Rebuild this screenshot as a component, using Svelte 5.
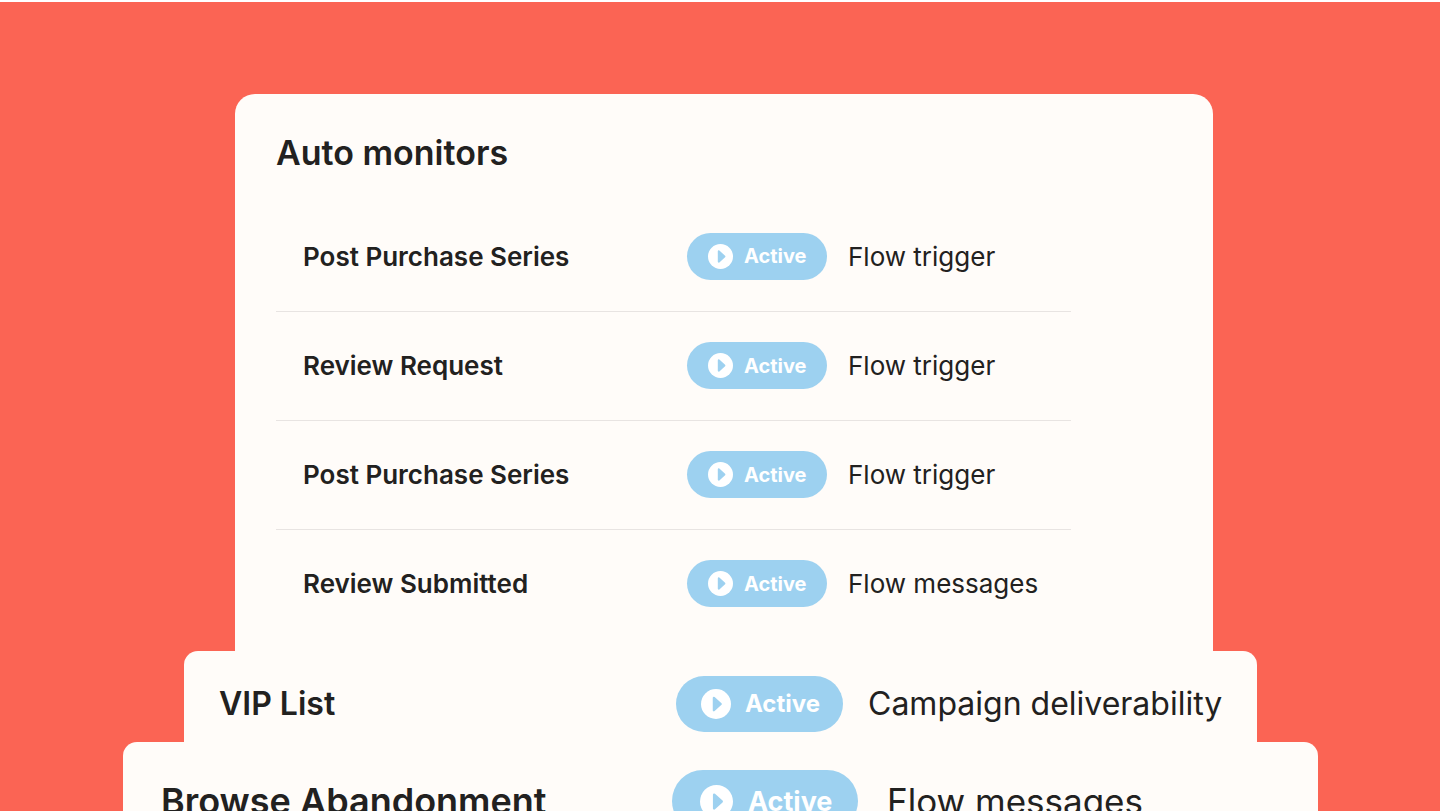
<script lang="ts">
	type Monitor = { name: string; status: string; type: string };

	const monitors: Monitor[] = [
		{ name: 'Post Purchase Series', status: 'Active', type: 'Flow trigger' },
		{ name: 'Review Request', status: 'Active', type: 'Flow trigger' },
		{ name: 'Post Purchase Series', status: 'Active', type: 'Flow trigger' },
		{ name: 'Review Submitted', status: 'Active', type: 'Flow messages' }
	];

	const vip: Monitor[] = [{ name: 'VIP List', status: 'Active', type: 'Campaign deliverability' }];
	const browse: Monitor[] = [{ name: 'Browse Abandonment', status: 'Active', type: 'Flow messages' }];
</script>

{#snippet table(rows: Monitor[], label: string)}
	<table aria-label={label}>
		<tbody>
			{#each rows as row}
				<tr>
					<th scope="row">{row.name}</th>
					<td class="status">
						<span class="badge">
							<svg viewBox="0 0 24 24" aria-hidden="true">
								<circle cx="12" cy="12" r="12" fill="#fff" />
								<path
									d="M10.3 7 L15.8 12 L10.3 17 Z"
									fill="#9dd1f0"
									stroke="#9dd1f0"
									stroke-width="1.8"
									stroke-linejoin="round"
								/>
							</svg>
							{row.status}
						</span>
					</td>
					<td class="type">{row.type}</td>
				</tr>
			{/each}
		</tbody>
	</table>
{/snippet}

<main>
	<section class="card monitors">
		<h1>Auto monitors</h1>
		{@render table(monitors, 'Auto monitors')}
	</section>
	<section class="card vip">
		{@render table(vip, 'VIP List')}
	</section>
	<section class="card browse">
		{@render table(browse, 'Browse Abandonment')}
	</section>
</main>

<style>
	main {
		box-sizing: border-box;
		height: 100vh;
		overflow: hidden;
		padding-top: 92px;
		border-top: 2px solid #fff;
		background: #fb6454;
		color: #222120;
		font-family: Inter, 'Liberation Sans', sans-serif;
	}

	.card {
		background: #fffcf9;
	}

	h1 {
		margin: 0;
		font-size: 34px;
		font-weight: 600;
		line-height: 40px;
	}

	table {
		width: 100%;
		border-collapse: collapse;
		table-layout: fixed;
	}

	th,
	td {
		padding: 0;
		text-align: left;
		vertical-align: middle;
		white-space: nowrap;
	}

	th {
		font-weight: 600;
	}

	.badge {
		display: flex;
		box-sizing: border-box;
		align-items: center;
		width: fit-content;
		border-radius: 32px;
		background: #9dd1f0;
		color: #fff;
		font-weight: 700;
	}

	.badge svg {
		flex: none;
	}

	.monitors {
		margin: 0 227px 0 235px;
		padding: 39px 142px 13px 41px;
		border-radius: 20px 20px 0 0;
		font-size: 26px;
	}

	.monitors table {
		margin-top: 29px;
	}

	.monitors tr {
		height: 109px;
	}

	.monitors tr + tr {
		border-top: 1px solid #e8e4e2;
	}

	.monitors th {
		padding-left: 27px;
	}

	.monitors .status {
		width: 161px;
	}

	.monitors .type {
		width: 223px;
	}

	.monitors .badge {
		gap: 11px;
		height: 47px;
		padding: 0 20px 0 21px;
		font-size: 20px;
	}

	.monitors svg {
		width: 25px;
		height: 25px;
	}

	.vip {
		margin: 0 183px 0 184px;
		padding-left: 35px;
		border-radius: 14px 14px 0 0;
		font-size: 32px;
	}

	.vip tr {
		height: 91px;
	}

	/* the status sits a little below the middle of the strip */
	.vip th,
	.vip td {
		padding-top: 14px;
	}

	.vip .status {
		width: 192px;
	}

	.vip .type {
		width: 389px;
	}

	.vip .badge {
		gap: 14px;
		height: 56px;
		padding: 0 23px 0 25px;
		font-size: 24px;
	}

	.vip svg {
		width: 30px;
		height: 30px;
	}

	.browse {
		margin: 0 122px 0 123px;
		padding-left: 38px;
		border-radius: 14px 14px 0 0;
		font-size: 35px;
	}

	.browse tr {
		height: 118px;
	}

	.browse th {
		font-size: 36px;
	}

	.browse .status {
		width: 215px;
	}

	.browse .type {
		width: 431px;
	}

	.browse .badge {
		gap: 15px;
		height: 62px;
		padding: 0 26px 0 28px;
		font-size: 27px;
	}

	.browse svg {
		width: 33px;
		height: 33px;
	}
</style>
